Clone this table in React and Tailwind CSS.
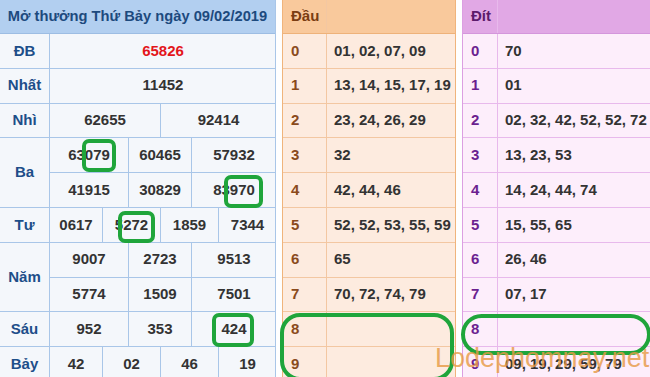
import React from "react";

const font = { fontFamily: '"Liberation Sans", Arial, sans-serif' };

const prizes = [
  { label: "ĐB", rows: [["65826"]], red: true },
  { label: "Nhất", rows: [["11452"]] },
  { label: "Nhì", rows: [["62655", "92414"]] },
  { label: "Ba", rows: [["63079", "60465", "57932"], ["41915", "30829", "83970"]] },
  { label: "Tư", rows: [["0617", "5272", "1859", "7344"]] },
  { label: "Năm", rows: [["9007", "2723", "9513"], ["5774", "1509", "7501"]] },
  { label: "Sáu", rows: [["952", "353", "424"]] },
  { label: "Bảy", rows: [["42", "02", "46", "19"]] },
];

const widths = {
  1: ["w-[226px]"],
  2: ["w-[111px]", "w-[115px]"],
  3: ["w-[79px]", "w-[63px]", "w-[84px]"],
  4: ["w-[53px]", "w-[58px]", "w-[58px]", "w-[57px]"],
};

const dau = [
  "01, 02, 07, 09",
  "13, 14, 15, 17, 19",
  "23, 24, 26, 29",
  "32",
  "42, 44, 46",
  "52, 52, 53, 55, 59",
  "65",
  "70, 72, 74, 79",
  "",
  "",
];

const dit = [
  "70",
  "01",
  "02, 32, 42, 52, 52, 72",
  "13, 23, 53",
  "14, 24, 44, 74",
  "15, 55, 65",
  "26, 46",
  "07, 17",
  "",
  "09, 19, 29, 59, 79",
];

function ResultTable() {
  return (
    <div className="w-[276px] shrink-0 flex flex-col border-r border-[#a9c6e8] bg-[#f4f7fb]">
      <div className="h-[34px] shrink-0 flex items-center justify-center bg-[#b2cff0] border-b border-[#9dbde3] text-[14.7px] font-bold text-[#1d4a7e]">
        Mở thưởng Thứ Bảy ngày 09/02/2019
      </div>
      {prizes.map((p) => (
        <div key={p.label} className="flex shrink-0">
          <div className="w-[50px] shrink-0 flex items-center justify-center border-r border-b border-[#a9c6e8] text-[15px] font-bold text-[#1d4e89]">
            {p.label}
          </div>
          <div className="flex flex-col">
            {p.rows.map((cells, ri) => (
              <div key={ri} className="flex h-[34.8px] border-b border-[#a9c6e8]">
                {cells.map((c, ci) => (
                  <div
                    key={ci}
                    className={
                      widths[cells.length][ci] +
                      " flex items-center justify-center text-[15px] font-bold " +
                      (p.red ? "text-[#e3161b] " : "text-[#333333] ") +
                      (ci < cells.length - 1 ? "border-r border-[#a9c6e8]" : "")
                    }
                  >
                    {c}
                  </div>
                ))}
              </div>
            ))}
          </div>
        </div>
      ))}
    </div>
  );
}

function LotoTable({ title, data, theme }) {
  return (
    <div className={"flex flex-col shrink-0 border-x " + theme.wrap}>
      <div className={"h-[34px] shrink-0 flex border-b " + theme.head}>
        <div className={"shrink-0 flex items-center px-2 border-r text-[15px] font-bold " + theme.labelCol + " " + theme.line}>
          {title}
        </div>
        <div className="flex-1" />
      </div>
      {data.map((v, i) => (
        <div key={i} className={"h-[34.8px] shrink-0 flex border-b " + theme.line}>
          <div className={"shrink-0 flex items-center px-2 border-r text-[15px] font-bold " + theme.labelCol + " " + theme.line + " " + theme.digit}>
            {i}
          </div>
          <div className="flex-1 flex items-center px-[7px] text-[15px] font-bold text-[#333333] whitespace-nowrap">
            {v}
          </div>
        </div>
      ))}
    </div>
  );
}

function Ring({ className }) {
  return <div className={"absolute border-[4px] border-[#1fa53b] " + className} />;
}

export default function App() {
  return (
    <div
      className="relative w-[650px] h-[377px] overflow-hidden bg-white flex"
      style={font}
    >
      <ResultTable />
      <div className="w-[6px] shrink-0" />
      <LotoTable
        title="Đầu"
        data={dau}
        theme={{
          wrap: "w-[174px] bg-[#fdebdf] border-[#f0b47c]",
          head: "bg-[#f9c99c] border-[#eeb27a] text-[#7a3d12]",
          labelCol: "w-[44px]",
          line: "border-[#f3c7a2]",
          digit: "text-[#8a4a1c]",
        }}
      />
      <div className="w-[6px] shrink-0" />
      <LotoTable
        title="Đít"
        data={dit}
        theme={{
          wrap: "w-[190px] bg-[#fdeefb] border-[#dc9fe2]",
          head: "bg-[#e1a8e5] border-[#d496dc] text-[#5b1a6b]",
          labelCol: "w-[35px]",
          line: "border-[#e8b9ec]",
          digit: "text-[#6b1f90]",
        }}
      />

      <Ring className="left-[82px] top-[139px] w-[34px] h-[33px] rounded-[7px]" />
      <Ring className="left-[224px] top-[175px] w-[39px] h-[33px] rounded-[7px]" />
      <Ring className="left-[118px] top-[211px] w-[37px] h-[32px] rounded-[7px]" />
      <Ring className="left-[212px] top-[313px] w-[42px] h-[34px] rounded-[7px]" />
      <Ring className="left-[280px] top-[313px] w-[174px] h-[68px] rounded-[20px]" />
      <Ring className="left-[461px] top-[314px] w-[190px] h-[41px] rounded-[22px]" />

      <div className="absolute left-[435px] top-[345px] text-[27px] leading-none text-[#e79a45] opacity-80 whitespace-nowrap">
        Lodephomnay.net
      </div>
    </div>
  );
}
